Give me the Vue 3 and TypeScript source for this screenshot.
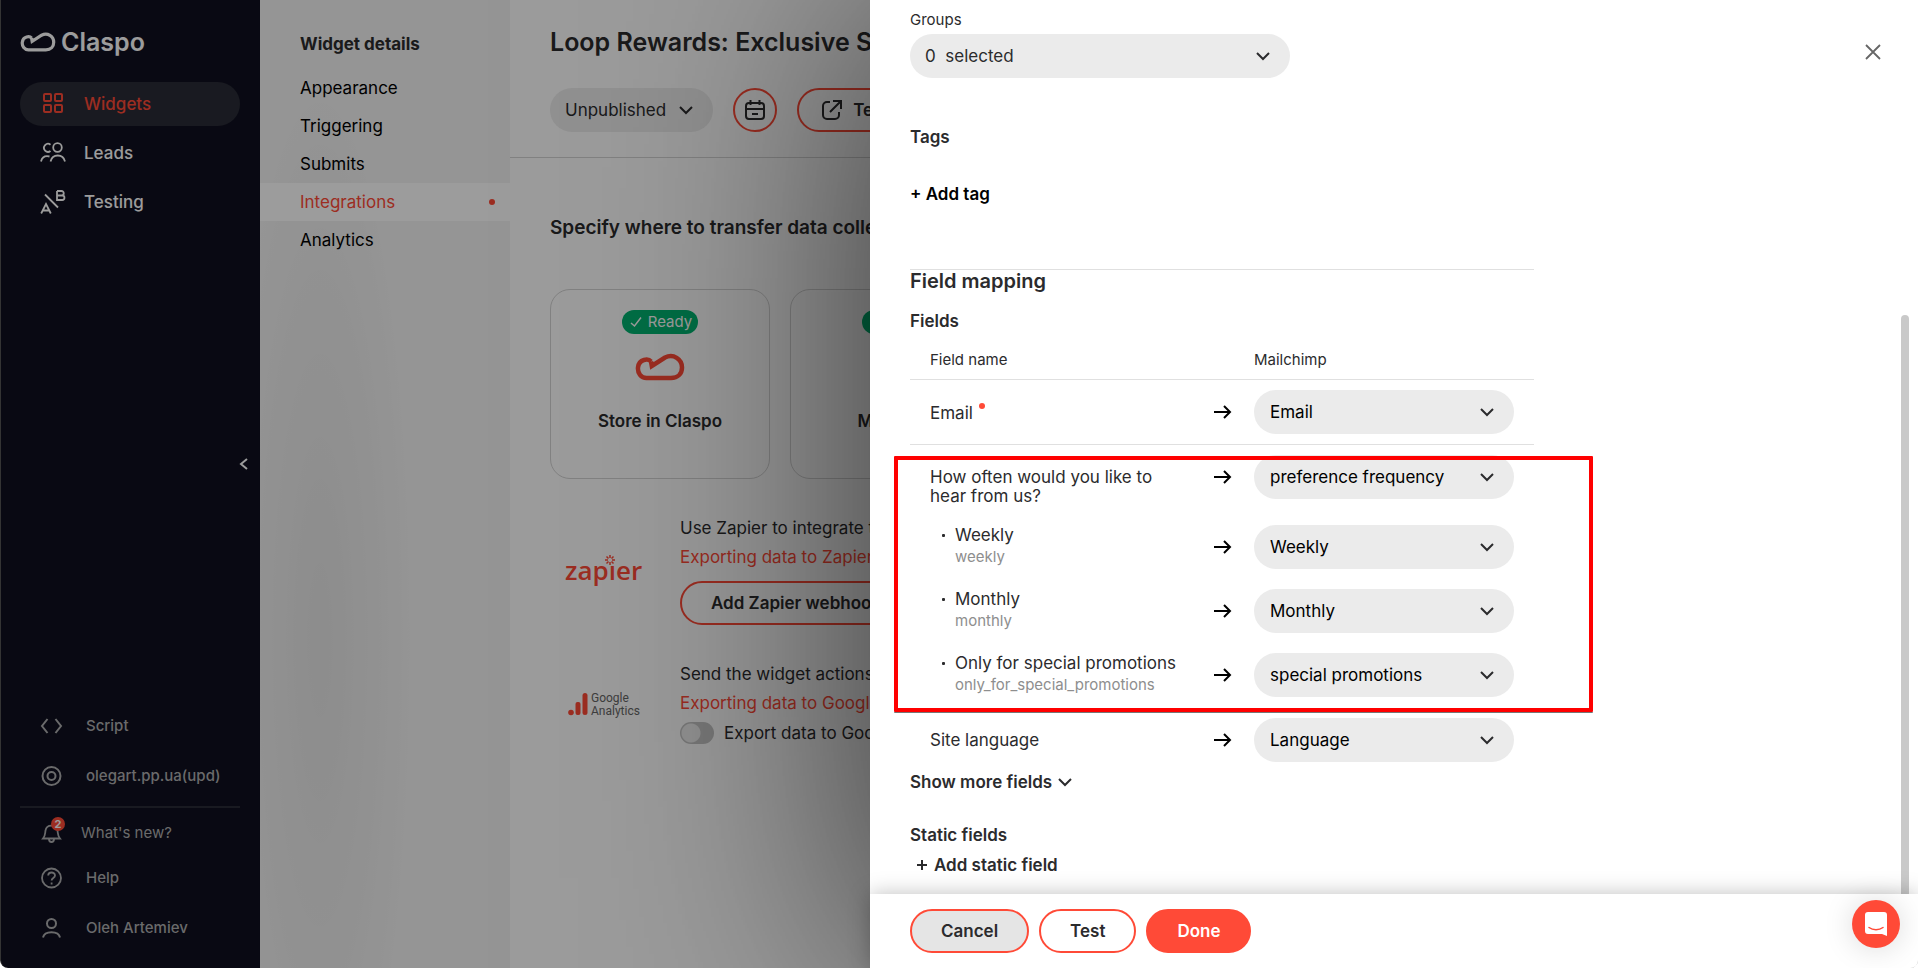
<script setup lang="ts">
import { ref } from 'vue'

interface MenuItem {
  label: string
  icon: string
}

interface Mapping {
  name: string
  code?: string
  target: string
  kind: 'required' | 'question' | 'option' | 'plain'
}

const cloudPath =
  'M16 8.5C13.5 5.5 4 5.5 3 14.5C2.5 20 6 25 11.500 25H36C43 25 47 20.500 47 14.500C47 6 38.500 0.500 30 4.500L16.800 13L16 8.500'

const mainMenu: MenuItem[] = [
  { label: 'Widgets', icon: 'widgets' },
  { label: 'Leads', icon: 'leads' },
  { label: 'Testing', icon: 'testing' },
]
const activeMenu = ref('Widgets')

const detailPages: string[] = ['Appearance', 'Triggering', 'Submits', 'Integrations', 'Analytics']
const activePage = ref('Integrations')

const stores: string[] = ['Store in Claspo', 'Mailchimp']

const groups = ref('0\u00a0\u00a0selected')
const exportToGoogle = ref(false)

const mappings = ref<Mapping[]>([
  { name: 'Email', target: 'Email', kind: 'required' },
  { name: 'How often would you like to hear from us?', target: 'preference frequency', kind: 'question' },
  { name: 'Weekly', code: 'weekly', target: 'Weekly', kind: 'option' },
  { name: 'Monthly', code: 'monthly', target: 'Monthly', kind: 'option' },
  { name: 'Only for special promotions', code: 'only_for_special_promotions', target: 'special promotions', kind: 'option' },
  { name: 'Site language', target: 'Language', kind: 'plain' },
])
</script>

<template>
  <div class="window">
    <aside class="sidebar">
      <div class="brand">
        <svg class="brand-mark" viewBox="0 0 50 28" fill="none" stroke="currentColor" stroke-width="4.500">
          <path :d="cloudPath" />
        </svg>
        <span>Claspo</span>
      </div>

      <nav class="main-menu">
        <a
          v-for="item in mainMenu"
          :key="item.label"
          href="#"
          class="main-link"
          :class="{ active: item.label === activeMenu }"
          @click.prevent="activeMenu = item.label"
        >
          <svg v-if="item.icon === 'widgets'" class="menu-icon" viewBox="0 0 26 26" fill="none" stroke="currentColor" stroke-width="2">
            <rect x="4" y="3" width="7" height="7" rx="1" />
            <rect x="15" y="3" width="7" height="7" rx="1" />
            <rect x="4" y="14" width="7" height="7" rx="1" />
            <rect x="15" y="14" width="7" height="7" rx="1" />
          </svg>
          <svg v-else-if="item.icon === 'leads'" class="menu-icon" viewBox="0 0 26 26" fill="none" stroke="currentColor" stroke-width="1.800">
            <circle cx="17.500" cy="7.500" r="4.300" />
            <path d="M10.500 4.700A4 4 0 1 0 10.500 11" />
            <path d="M10.500 21.500C12.500 13.500 23 13.500 25 21.500" />
            <path d="M1 21.500C2 17.500 5 15.500 9.500 16.500" />
          </svg>
          <svg v-else class="menu-icon" viewBox="0 0 26 26" fill="none" stroke="currentColor" stroke-width="1.800">
            <path d="M5 5.500L18 18.500" />
            <path d="M17 2H21.500A2.200 2.200 0 0 1 21.500 6.500H17M17 2V11H22.200A2.200 2.200 0 0 0 22.200 6.500" />
            <path d="M1.200 24.500L6 15L10.800 24.500M3 21.500H9" />
          </svg>
          <span>{{ item.label }}</span>
        </a>
      </nav>

      <button class="collapse" type="button" aria-label="Collapse menu">
        <svg viewBox="0 0 10 14" fill="none" stroke="currentColor" stroke-width="2"><path d="M8 2L2 7L8 12" /></svg>
      </button>

      <nav class="foot-menu">
        <a href="#" class="foot-link">
          <svg class="foot-icon" viewBox="0 0 24 24" fill="none" stroke="currentColor" stroke-width="2">
            <path d="M7.500 5L2 12L7.500 19M15.500 5L21 12L15.500 19" />
          </svg>
          <span>Script</span>
        </a>
        <a href="#" class="foot-link">
          <svg class="foot-icon" viewBox="0 0 24 24" fill="none" stroke="currentColor" stroke-width="2">
            <circle cx="11.500" cy="12" r="9" /><circle cx="11.500" cy="12" r="4" />
          </svg>
          <span>olegart.pp.ua(upd)</span>
        </a>
      </nav>
      <nav class="foot-menu last">
        <a href="#" class="foot-link news">
          <span class="bell">
            <svg class="foot-icon" viewBox="0 0 24 24" fill="none" stroke="currentColor" stroke-width="1.800">
              <path d="M3 17.500C5.500 14.500 5 12.500 5.500 9.500C6.500 3 16.500 3 17.500 9.500C18 12.500 17.500 14.500 20 17.500Z" />
              <path d="M9 18C9 22 14 22 14 18" />
            </svg>
            <span class="count">2</span>
          </span>
          <span>What's new?</span>
        </a>
        <a href="#" class="foot-link">
          <svg class="foot-icon" viewBox="0 0 24 24" fill="none" stroke="currentColor" stroke-width="1.800">
            <circle cx="11.500" cy="12" r="9.500" />
            <path d="M8.200 9.500C8.200 5.500 15 5.500 15 9.500C15 12 11.600 12 11.600 14.500M11.600 16.500V18.500" />
          </svg>
          <span>Help</span>
        </a>
        <a href="#" class="foot-link">
          <svg class="foot-icon" viewBox="0 0 24 24" fill="none" stroke="currentColor" stroke-width="2">
            <circle cx="11.500" cy="7.500" r="4.500" />
            <path d="M3 21.500C4.500 14.500 18.500 14.500 20 21.500" />
          </svg>
          <span>Oleh Artemiev</span>
        </a>
      </nav>
    </aside>

    <nav class="details">
      <h2>Widget details</h2>
      <a
        v-for="page in detailPages"
        :key="page"
        href="#"
        :class="{ active: page === activePage }"
        @click.prevent="activePage = page"
      >{{ page }}</a>
    </nav>

    <main class="page">
      <header class="page-head">
        <h1>Loop Rewards: Exclusive S</h1>
        <div class="actions">
          <button class="status" type="button">
            Unpublished
            <svg class="caret" viewBox="0 0 14 10" fill="none" stroke="currentColor" stroke-width="2"><path d="M1 2L7 8L13 2" /></svg>
          </button>
          <button class="outline round" type="button" aria-label="Schedule">
            <svg class="action-icon" viewBox="0 0 24 24" fill="none" stroke="currentColor" stroke-width="2">
              <rect x="3" y="5" width="18" height="16" rx="3" />
              <path d="M3 11H21M7.500 2V7M16.500 2V7M9 16H15" />
            </svg>
          </button>
          <button class="outline test-widget" type="button">
            <svg class="action-icon" viewBox="0 0 24 24" fill="none" stroke="currentColor" stroke-width="2">
              <path d="M10 4H7A4 4 0 0 0 3 8V17A4 4 0 0 0 7 21H15A4 4 0 0 0 19 17V14M10 14L20.500 3.500M13 3H21V11" />
            </svg>
            Test
          </button>
        </div>
      </header>

      <section class="transfer">
        <h2>Specify where to transfer data collected</h2>
        <div class="cards">
          <article v-for="store in stores" :key="store" class="card">
            <span class="ready">
              <svg viewBox="0 0 12 12" fill="none" stroke="currentColor" stroke-width="1.500"><path d="M1 7L4.500 10L11 1.500" /></svg>
              Ready
            </span>
            <svg class="card-logo" viewBox="0 0 50 28" fill="none" stroke="currentColor" stroke-width="4.500">
              <path :d="cloudPath" />
            </svg>
            <h3>{{ store }}</h3>
          </article>
        </div>

        <div class="service">
          <div class="zapier">
            <svg viewBox="0 0 10 10" fill="none" stroke="currentColor" stroke-width="1.500">
              <path d="M5 0V3M5 7V10M0 5H3M7 5H10M1.500 1.500L3.500 3.500M6.500 6.500L8.500 8.500M8.500 1.500L6.500 3.500M3.500 6.500L1.500 8.500" />
            </svg>
            <span>zap&#305;er</span>
          </div>
          <div class="service-body">
            <p>Use Zapier to integrate the</p>
            <a href="#">Exporting data to Zapier</a>
            <button class="outline webhook" type="button">Add Zapier webhook</button>
          </div>
        </div>

        <div class="service">
          <div class="analytics">
            <svg viewBox="0 0 20 24" fill="currentColor">
              <circle cx="3" cy="20.500" r="2.800" />
              <rect x="7.500" y="10" width="5" height="13" rx="2" />
              <rect x="14.500" y="1" width="5" height="22" rx="2.500" />
            </svg>
            <span>Google<br />Analytics</span>
          </div>
          <div class="service-body">
            <p>Send the widget actions</p>
            <a href="#">Exporting data to Google</a>
            <label class="toggle">
              <input v-model="exportToGoogle" type="checkbox" />
              Export data to Google
            </label>
          </div>
        </div>
      </section>
    </main>

    <div class="backdrop"></div>

    <section class="drawer" role="dialog" aria-label="Mailchimp integration">
      <div class="drawer-body">
        <button class="close" type="button" aria-label="Close">
          <svg viewBox="0 0 16 16" fill="none" stroke="currentColor" stroke-width="1.800"><path d="M1 1L15 15M15 1L1 15" /></svg>
        </button>
        <span class="scroll-thumb"></span>

        <label class="small" for="groups">Groups</label>
        <div class="select groups">
          <select id="groups" v-model="groups">
            <option>{{ groups }}</option>
          </select>
          <svg class="caret" viewBox="0 0 14 10" fill="none" stroke="currentColor" stroke-width="2"><path d="M1 2L7 8L13 2" /></svg>
        </div>

        <h3 class="tags">Tags</h3>
        <button class="text-button add-tag" type="button">+ Add tag</button>

        <div class="mapping">
          <h2>Field mapping</h2>
          <h3>Fields</h3>
          <div class="table-wrap">
            <table>
              <thead>
                <tr>
                  <th class="name-col" scope="col">Field name</th>
                  <th class="arrow-col"></th>
                  <th scope="col">Mailchimp</th>
                </tr>
              </thead>
              <tbody>
                <tr v-for="(row, index) in mappings" :key="row.name" :class="row.kind">
                  <td class="name">
                    <label :for="`field-${index}`">{{ row.name }}</label>
                    <span v-if="row.code" class="code">{{ row.code }}</span>
                  </td>
                  <td class="arrow">
                    <svg viewBox="0 0 18 14" fill="none" stroke="currentColor" stroke-width="2"><path d="M0 7H16M10 1L16 7L10 13" /></svg>
                  </td>
                  <td class="target">
                    <div class="select">
                      <select :id="`field-${index}`" v-model="row.target">
                        <option>{{ row.target }}</option>
                      </select>
                      <svg class="caret" viewBox="0 0 14 10" fill="none" stroke="currentColor" stroke-width="2"><path d="M1 2L7 8L13 2" /></svg>
                    </div>
                  </td>
                </tr>
              </tbody>
            </table>
            <span class="highlight"></span>
          </div>
          <button class="text-button more" type="button">
            Show more fields
            <svg class="caret" viewBox="0 0 14 10" fill="none" stroke="currentColor" stroke-width="2"><path d="M1 2L7 8L13 2" /></svg>
          </button>
          <h3 class="static">Static fields</h3>
          <button class="text-button add-static" type="button">
            <svg viewBox="0 0 10 10" fill="none" stroke="currentColor" stroke-width="2"><path d="M5 0V10M0 5H10" /></svg>
            Add static field
          </button>
        </div>
      </div>

      <footer class="drawer-foot">
        <button class="outline cancel" type="button">Cancel</button>
        <button class="outline" type="button">Test</button>
        <button class="outline done" type="button">Done</button>
      </footer>
    </section>

    <button class="chat" type="button" aria-label="Open chat">
      <svg viewBox="0 0 24 26">
        <path d="M4 1H20A3 3 0 0 1 23 4V25L18 23H4A3 3 0 0 1 1 20V4A3 3 0 0 1 4 1Z" fill="#fff" />
        <path d="M5 16.500C9 19.500 15 19.500 19 16.500" fill="none" stroke="#ff4a37" stroke-width="1.500" stroke-linecap="round" />
      </svg>
    </button>
  </div>
</template>

<style>
body {
  margin: 0;
  background: #fff;
}
</style>

<style scoped>
.window {
  position: relative;
  display: flex;
  box-sizing: border-box;
  height: calc(100vh - 5px);
  overflow: hidden;
  border-radius: 0 0 8px 8px;
  background: #fff;
  color: #2b2b2d;
  font-family: Inter, "Liberation Sans", sans-serif;
  font-size: 17px;
  line-height: 20px;
}

.window * {
  box-sizing: border-box;
}

svg {
  display: block;
  flex: none;
}

h1,
h2,
h3,
p {
  margin: 0;
  font-weight: 600;
}

a {
  color: inherit;
  text-decoration: none;
}

button,
select {
  margin: 0;
  border: 0;
  background: none;
  color: inherit;
  font: inherit;
}

button {
  padding: 0;
}

.caret {
  width: 14px;
  height: 10px;
}

/* Sidebar */
.sidebar {
  position: relative;
  display: flex;
  flex-direction: column;
  flex: none;
  width: 260px;
  padding: 25px 20px 15px 19px;
  border-left: 1px solid #555;
  border-radius: 0 0 0 8px;
  background: #0f101f;
  color: #fff;
}

.brand {
  display: flex;
  align-items: center;
  gap: 5px;
  height: 34px;
  font-size: 25px;
  font-weight: 600;
}

.brand-mark {
  width: 36px;
  height: 20px;
}

.main-menu {
  display: flex;
  flex-direction: column;
  gap: 5px;
  margin-top: 23px;
}

.main-link {
  display: flex;
  align-items: center;
  gap: 18px;
  height: 44px;
  padding-left: 20px;
  border-radius: 22px;
  font-weight: 500;
}

.main-link.active {
  background: #292b36;
  color: #ff4a37;
}

.menu-icon {
  width: 26px;
  height: 26px;
}

.collapse {
  position: absolute;
  top: 50%;
  right: 10px;
  margin-top: -27px;
}

.collapse svg {
  width: 12px;
  height: 14px;
}

.foot-menu {
  display: flex;
  flex-direction: column;
  margin-top: auto;
  padding-bottom: 5px;
  border-bottom: 2px solid #292b36;
  color: #aeaeb0;
  font-size: 15px;
  font-weight: 500;
}

.foot-menu.last {
  margin-top: 0;
  padding-bottom: 0;
  border: 0;
}

.foot-link {
  display: flex;
  align-items: center;
  gap: 22px;
  height: 50px;
  padding-left: 20px;
}

.foot-link.news {
  gap: 17px;
  height: 45px;
  padding-top: 5px;
  font-weight: 400;
}

.foot-icon {
  width: 24px;
  height: 24px;
}

.bell {
  position: relative;
}

.count {
  position: absolute;
  top: -4px;
  right: -1px;
  width: 14px;
  height: 14px;
  border-radius: 7px;
  background: #ff4a37;
  color: #fff;
  font-size: 11px;
  font-weight: 700;
  line-height: 14px;
  text-align: center;
}

/* Widget details column */
.details {
  flex: none;
  width: 250px;
  padding-top: 34px;
  background: radial-gradient(ellipse 100px 600px at 60px 640px, rgba(0, 0, 0, 0.06), rgba(0, 0, 0, 0)), #f4f4f4;
  color: #000;
}

.details h2 {
  margin-bottom: 15px;
  padding-left: 40px;
  color: #2b2b2d;
  font-size: 17px;
  font-weight: 700;
}

.details a {
  display: flex;
  align-items: center;
  justify-content: space-between;
  height: 38px;
  padding: 0 15px 0 40px;
}

.details .active {
  background: #fff;
  color: #ff4a37;
}

.details .active::after {
  width: 6px;
  height: 6px;
  border-radius: 3px;
  background: #ff4a37;
  content: "";
}

/* Page */
.page {
  flex: 1;
  min-width: 0;
  white-space: nowrap;
}

.page-head {
  height: 158px;
  padding: 27px 40px 0;
  border-bottom: 1px solid #d4d4d4;
}

h1 {
  font-size: 25px;
  line-height: 30px;
}

.actions {
  display: flex;
  gap: 20px;
  margin-top: 31px;
}

.status {
  display: flex;
  align-items: center;
  gap: 13px;
  height: 44px;
  padding: 0 20px 0 15px;
  border-radius: 22px;
  background: #ededed;
}

.outline {
  display: flex;
  align-items: center;
  justify-content: center;
  height: 44px;
  padding: 0 29px;
  border: 2px solid #ff4a37;
  border-radius: 22px;
  font-weight: 600;
}

.outline.round {
  width: 44px;
  padding: 0;
}

.outline.test-widget {
  gap: 9px;
  padding: 0 21px;
}

.action-icon {
  width: 24px;
  height: 24px;
}

.transfer {
  padding: 58px 40px 0;
}

.transfer h2 {
  font-size: 19px;
  line-height: 24px;
}

.cards {
  display: flex;
  gap: 20px;
  margin-top: 49px;
}

.card {
  display: flex;
  flex: none;
  flex-direction: column;
  align-items: center;
  width: 220px;
  height: 190px;
  padding-top: 20px;
  border: 1px solid #d4d4d4;
  border-radius: 20px;
}

.ready {
  display: flex;
  align-items: center;
  gap: 6px;
  height: 24px;
  padding: 0 6px 0 8px;
  border-radius: 12px;
  background: #00b471;
  color: #fff;
  font-size: 15px;
}

.ready svg {
  width: 12px;
  height: 12px;
}

.card-logo {
  width: 50px;
  height: 28px;
  margin: 19px 0 30px;
  color: #ff4a37;
}

.card h3 {
  font-size: 17px;
}

.service {
  display: grid;
  grid-template-columns: 130px 1fr;
  margin-top: 39px;
}

.service-body {
  display: flex;
  flex-direction: column;
  align-items: flex-start;
  gap: 9px;
}

.service-body p {
  font-weight: 400;
}

.service-body a {
  color: #ff4a37;
}

.service-body .webhook {
  margin-top: 5px;
}

.zapier {
  position: relative;
  padding: 40px 0 0 15px;
  color: #ff4a37;
  font-family: "Open Sans", sans-serif;
  font-size: 26px;
  font-weight: 600;
}

.zapier svg {
  position: absolute;
  top: 37px;
  left: 55px;
  width: 10px;
  height: 10px;
}

.zapier span {
  line-height: 24px;
}

.analytics {
  display: flex;
  align-items: flex-start;
  gap: 3px;
  padding: 28px 0 0 18px;
  color: #666;
  font-family: Roboto, sans-serif;
  font-size: 12px;
  line-height: 13px;
}

.analytics svg {
  width: 20px;
  height: 24px;
  color: #ff4a37;
}

.toggle {
  display: flex;
  align-items: center;
  gap: 10px;
  height: 22px;
}

.toggle input {
  width: 34px;
  height: 22px;
  margin: 0;
  border-radius: 11px;
  background: radial-gradient(circle at 11px 11px, #ededed 9px, #c4c4c4 10px);
  appearance: none;
}

.backdrop {
  position: absolute;
  inset: 0;
  background: rgba(0, 0, 0, 0.39);
}

/* Drawer */
.drawer {
  position: absolute;
  top: 0;
  right: 0;
  bottom: 0;
  left: 870px;
  display: flex;
  flex-direction: column;
  background: #fff;
  box-shadow: 0 0 300px rgba(0, 0, 0, 0.68);
}

.drawer-body {
  position: relative;
  flex: 1;
  min-height: 0;
  padding: 10px 40px 0;
  overflow: hidden;
}

.close {
  position: absolute;
  top: 44px;
  right: 37px;
  color: #666;
}

.close svg {
  width: 16px;
  height: 16px;
}

.scroll-thumb {
  position: absolute;
  top: 315px;
  right: 9px;
  bottom: 0;
  width: 8px;
  border-radius: 4px 4px 0 0;
  background: #c9c9c9;
}

.small {
  display: block;
  font-size: 15px;
}

.select {
  position: relative;
  width: 260px;
}

.select select {
  display: block;
  width: 100%;
  height: 44px;
  padding: 0 44px 0 16px;
  border-radius: 22px;
  background: #ebebeb;
  color: #000;
  appearance: none;
}

.select .caret {
  position: absolute;
  top: 17px;
  right: 20px;
  pointer-events: none;
}

.select.groups {
  width: 380px;
  margin-top: 4px;
}

.groups select {
  padding-left: 15px;
  color: #2b2b2d;
}

h3 {
  font-size: 17px;
}

.tags {
  margin-top: 49px;
}

.text-button {
  display: flex;
  align-items: center;
  height: 20px;
  font-weight: 600;
}

.add-tag {
  margin-top: 37px;
  color: #000;
}

.mapping {
  width: 624px;
  max-width: 100%;
  margin-top: 65px;
  border-top: 1px solid #e0e0e0;
}

.mapping h2 {
  font-size: 20px;
  line-height: 22px;
}

.mapping h3 {
  margin-top: 19px;
}

.table-wrap {
  position: relative;
  margin-top: 10px;
}

table {
  width: 100%;
  border-spacing: 0;
  table-layout: fixed;
}

th {
  height: 39px;
  padding: 0;
  border-bottom: 1px solid #e0e0e0;
  font-size: 15px;
  font-weight: 400;
  text-align: left;
}

td {
  height: 64px;
  padding: 10px 0 0;
  vertical-align: top;
}

.name-col {
  width: 284px;
  padding-left: 20px;
}

.arrow-col {
  width: 60px;
}

td.name {
  padding: 23px 20px 0;
  line-height: 19px;
}

td.arrow {
  padding: 25px 0 0 20px;
  color: #000;
}

.arrow svg {
  width: 18px;
  height: 14px;
}

.required td {
  height: 65px;
  border-bottom: 1px solid #e0e0e0;
}

.required label::after {
  display: inline-block;
  width: 6px;
  height: 6px;
  margin-left: 6px;
  border-radius: 3px;
  background: #ff4a37;
  content: "";
  vertical-align: 10px;
}

.question td {
  height: 70px;
}

.option td.name {
  padding: 10px 0 0 45px;
  line-height: 20px;
}

.plain td {
  padding-top: 11px;
}

.plain td.name {
  padding-top: 24px;
}

.plain td.arrow {
  padding-top: 26px;
}

.option label::before {
  display: inline-block;
  width: 3px;
  height: 3px;
  margin-left: -13px;
  margin-right: 10px;
  border-radius: 1px;
  background: #2b2b2d;
  content: "";
  vertical-align: 4px;
}

.code {
  display: block;
  margin-top: 2px;
  color: #8e8e8e;
  font-size: 15px;
}

.highlight {
  position: absolute;
  top: 115px;
  right: -59px;
  left: -16px;
  height: 256px;
  border: 4px solid #f00;
  border-radius: 1px;
  box-shadow: 0 1px 0 #777;
  pointer-events: none;
}

.more {
  gap: 6px;
  margin-top: 1px;
}

.mapping .static {
  margin-top: 33px;
}

.add-static {
  gap: 7px;
  margin: 10px 0 0 7px;
}

.add-static svg {
  width: 10px;
  height: 10px;
}

.drawer-foot {
  position: relative;
  display: flex;
  flex: none;
  gap: 10px;
  padding: 15px 40px;
  background: #fff;
  box-shadow: 0 0 20px rgba(0, 0, 0, 0.25);
}

.outline.cancel {
  background: #e5e5e5;
}

.outline.done {
  background: #ff4a37;
  color: #fff;
}

.chat {
  position: absolute;
  right: 18px;
  bottom: 20px;
  display: flex;
  align-items: center;
  justify-content: center;
  width: 48px;
  height: 48px;
  border-radius: 24px;
  background: #ff4a37;
  box-shadow: 0 1px 30px rgba(0, 0, 0, 0.15);
}

.chat svg {
  width: 24px;
  height: 26px;
}
</style>
